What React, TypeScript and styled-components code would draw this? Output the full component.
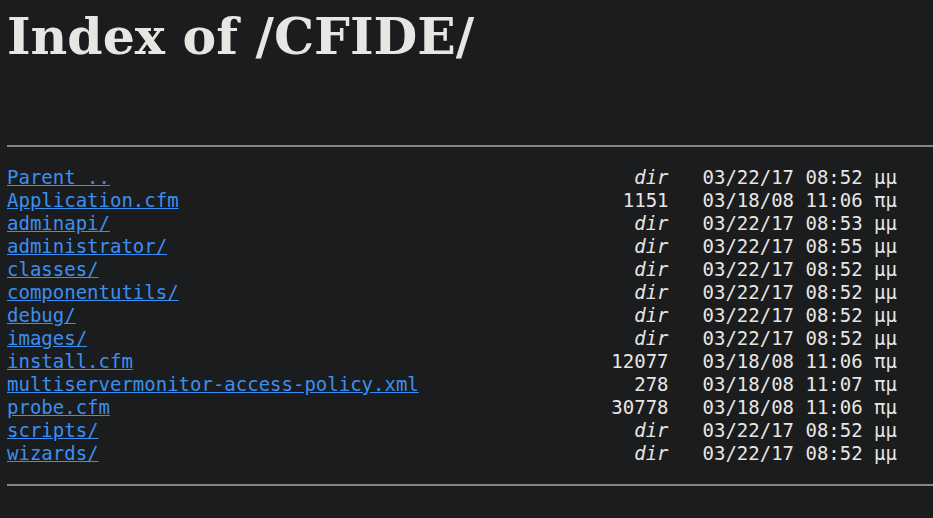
import React from "react";
import styled, { createGlobalStyle } from "styled-components";

const Global = createGlobalStyle`
  html, body { margin: 0; padding: 0; background: #1b1c1e; }
  body { color: #e8e6e3; }
`;

const Page = styled.div`
  padding: 0 0 0 7px;
  min-height: 518px;
  box-sizing: border-box;
`;

const Title = styled.h1`
  margin: 8px 0 0 0;
  font-family: "DejaVu Serif", serif;
  font-weight: bold;
  font-size: 50.5px;
  line-height: 58px;
  color: #e8e6e3;
  white-space: nowrap;
`;

const Rule = styled.hr<{ $top: number }>`
  margin: ${(p) => p.$top}px 0 0 0;
  border: 0;
  border-top: 2px solid #858585;
  height: 0;
`;

const Listing = styled.div`
  margin-top: 19px;
  width: 890px;
  display: grid;
  grid-template-columns: 1fr auto auto;
  font-family: "DejaVu Sans Mono", monospace;
  font-size: 19px;
  line-height: 23px;
`;

const NameLink = styled.a`
  color: #3b8ff0;
  text-decoration: underline;
  white-space: nowrap;
`;

const Size = styled.span<{ $dir: boolean }>`
  text-align: right;
  font-style: ${(p) => (p.$dir ? "italic" : "normal")};
  white-space: nowrap;
`;

const Date = styled.span`
  padding-left: 34px;
  white-space: nowrap;
`;

const rows: [string, string, string][] = [
  ["Parent ..", "dir", "03/22/17 08:52 μμ"],
  ["Application.cfm", "1151", "03/18/08 11:06 πμ"],
  ["adminapi/", "dir", "03/22/17 08:53 μμ"],
  ["administrator/", "dir", "03/22/17 08:55 μμ"],
  ["classes/", "dir", "03/22/17 08:52 μμ"],
  ["componentutils/", "dir", "03/22/17 08:52 μμ"],
  ["debug/", "dir", "03/22/17 08:52 μμ"],
  ["images/", "dir", "03/22/17 08:52 μμ"],
  ["install.cfm", "12077", "03/18/08 11:06 πμ"],
  ["multiservermonitor-access-policy.xml", "278", "03/18/08 11:07 πμ"],
  ["probe.cfm", "30778", "03/18/08 11:06 πμ"],
  ["scripts/", "dir", "03/22/17 08:52 μμ"],
  ["wizards/", "dir", "03/22/17 08:52 μμ"],
];

export default function App() {
  return (
    <Page>
      <Global />
      <Title>Index of /CFIDE/</Title>
      <Rule $top={79} />
      <Listing>
        {rows.map(([name, size, date]) => (
          <React.Fragment key={name}>
            <span>
              <NameLink href="#">{name}</NameLink>
            </span>
            <Size $dir={size === "dir"}>{size}</Size>
            <Date>{date}</Date>
          </React.Fragment>
        ))}
      </Listing>
      <Rule $top={19} />
    </Page>
  );
}
